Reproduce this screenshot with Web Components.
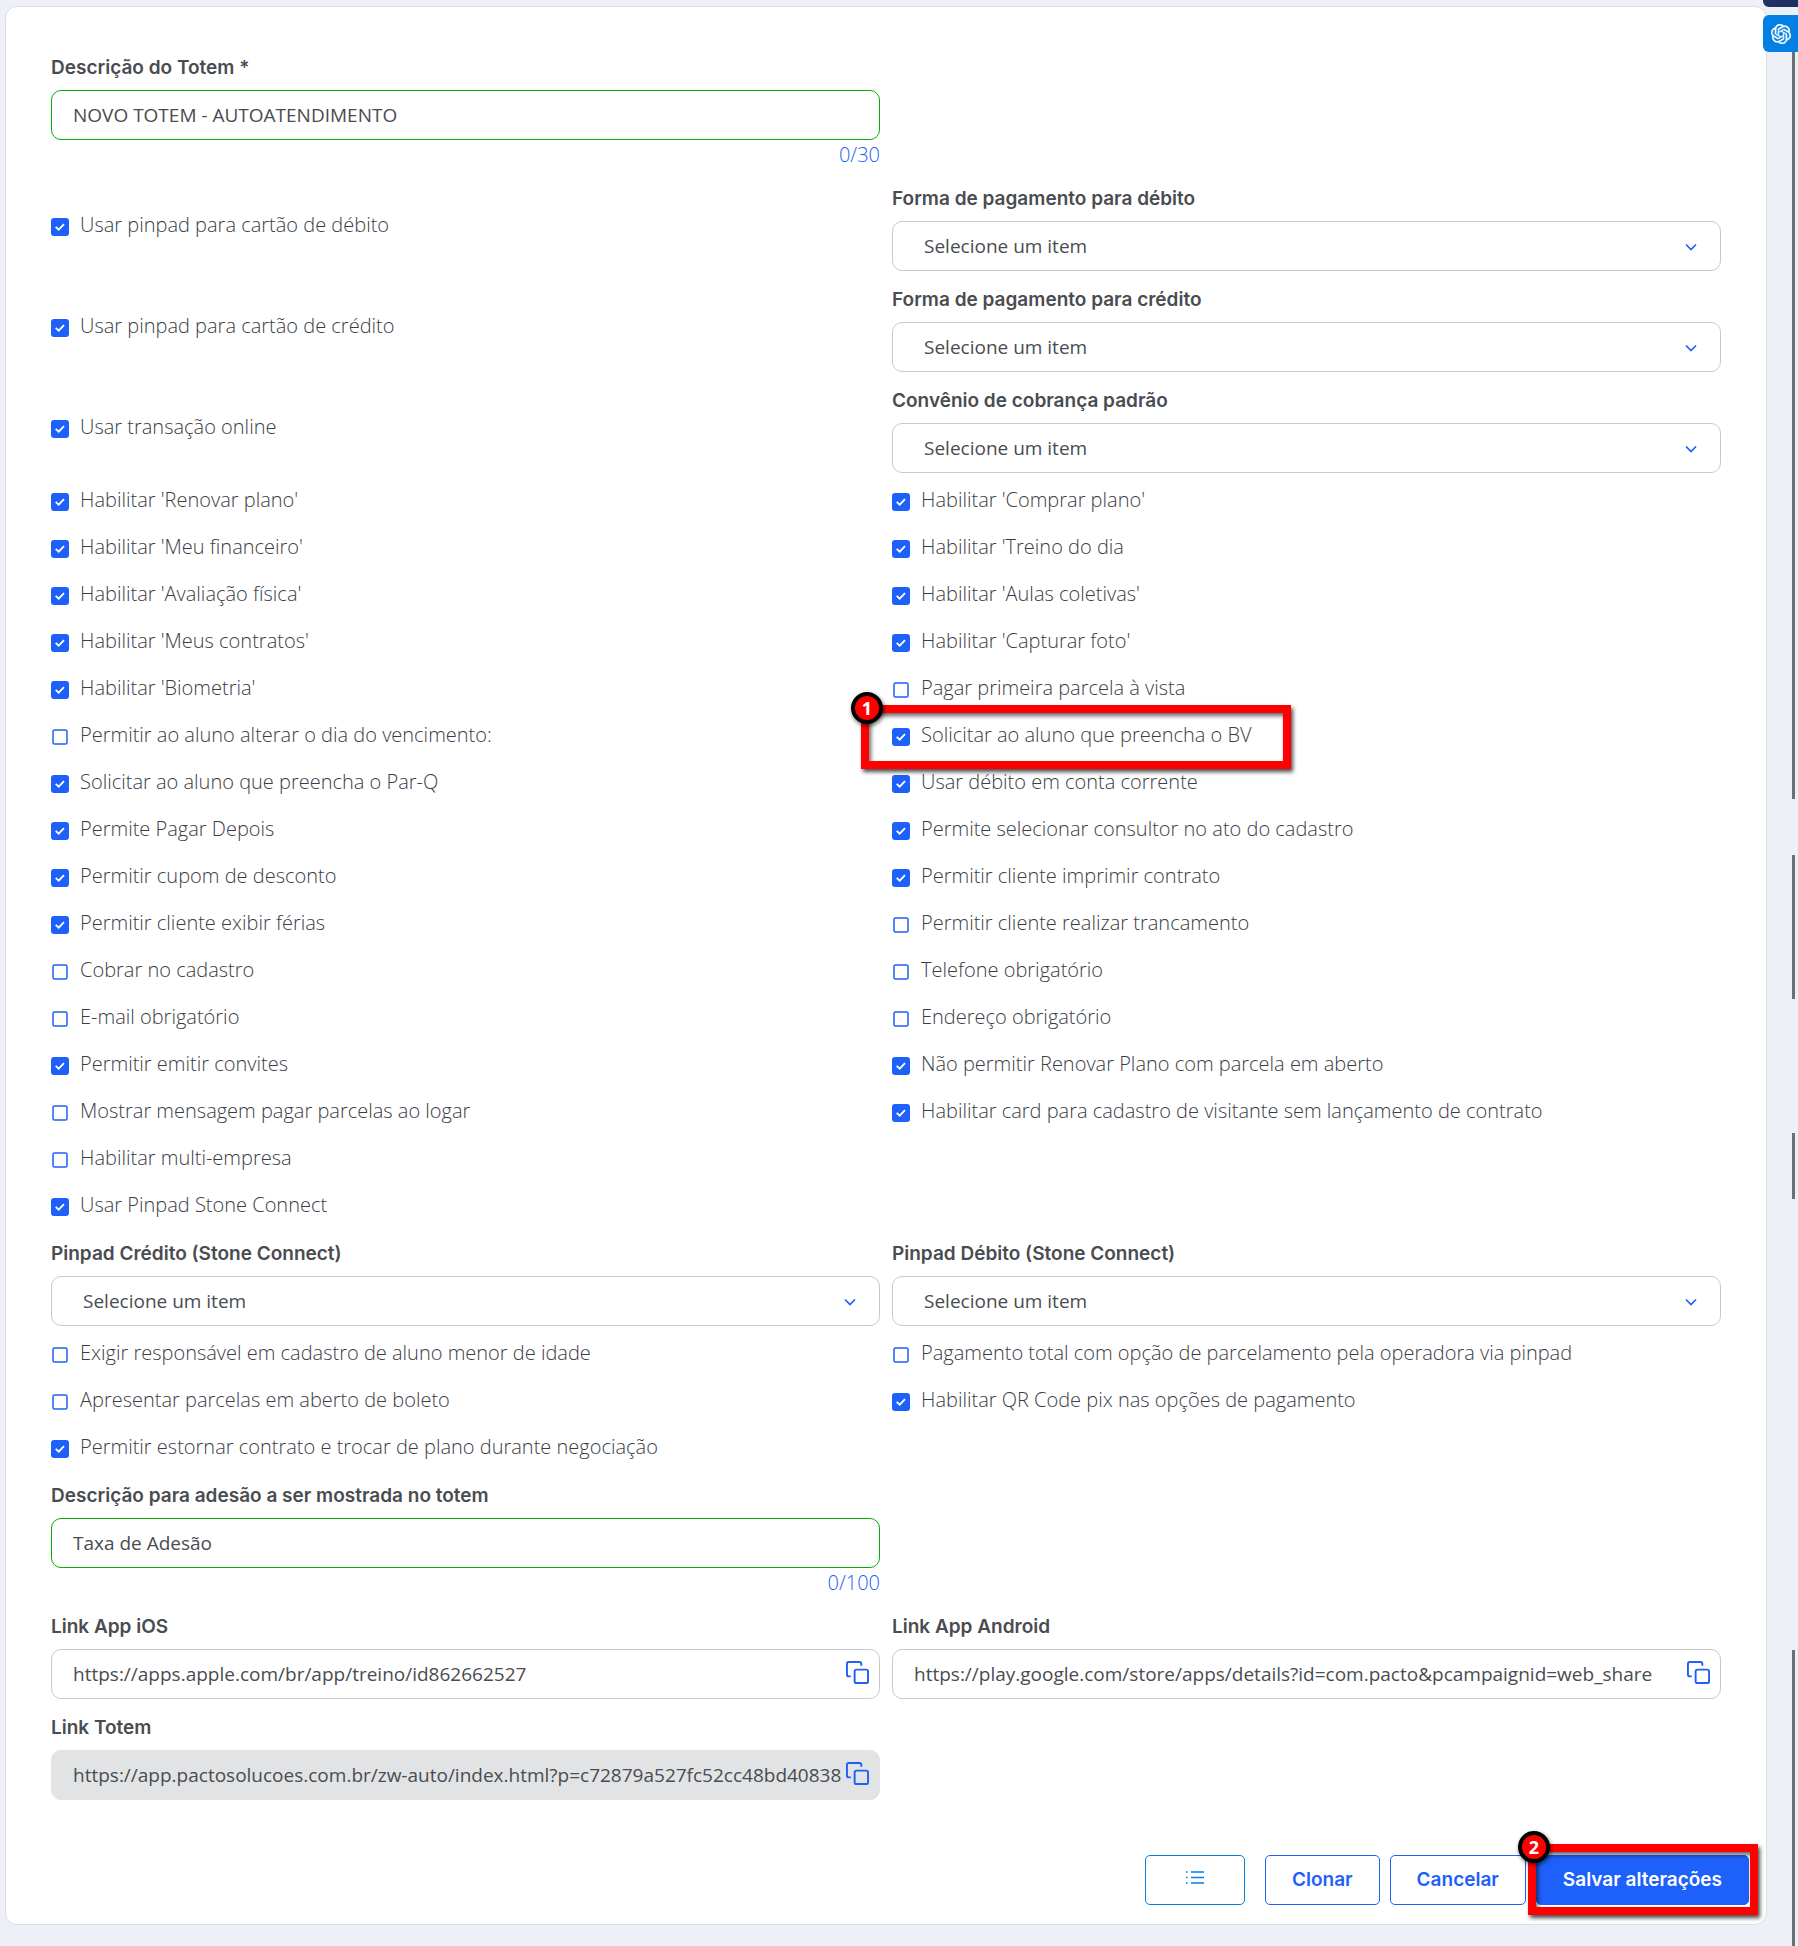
<!DOCTYPE html>
<html lang="pt-BR">
<head>
<meta charset="utf-8">
<meta name="viewport" content="width=device-width, initial-scale=1">
<title>Configuração do Totem</title>
<style>
  * {
    box-sizing: border-box;
  }

  body {
    --blue: #1e60fa;
    --text: #494c50;
    --text-light: #3a3d45;
    --line: #c7c9cc;
    --label-font: Inter, "Open Sans", sans-serif;
    margin: 0;
    background: #edf0f6;
    color: var(--text);
    font-family: "Open Sans", "Noto Sans", sans-serif;
    font-size: 19px;
  }
</style>
</head>
<body>
<totem-page></totem-page>

<script>
class TotemField extends HTMLElement {
  connectedCallback() {
    const label = this.getAttribute('label');
    const value = this.getAttribute('value') || '';
    const count = this.getAttribute('count');
    const disabled = this.hasAttribute('disabled') ? 'disabled' : '';

    this.attachShadow({ mode: 'open' }).innerHTML = `
      <style>
        * {
          box-sizing: border-box;
        }

        :host {
          display: block;
          padding-bottom: 17px;
        }

        label {
          display: block;
          margin-bottom: 10px;
          font: 600 19px/24px var(--label-font);
        }

        .control {
          position: relative;
        }

        input {
          display: block;
          width: 100%;
          height: 50px;
          padding: 0 22px 0 21px;
          border: 1px solid var(--line);
          border-radius: 10px;
          background: #fff;
          color: inherit;
          font: inherit;
        }

        :host([valid]) input {
          border-color: #04af04;
        }

        input:disabled {
          border-color: #e2e3e5;
          background: #e2e3e5;
        }

        .count {
          color: var(--blue);
          font-size: 20px;
          font-weight: 300;
          line-height: 30px;
          text-align: right;
        }

        button {
          position: absolute;
          top: 12px;
          right: 11px;
          padding: 0;
          border: 0;
          background: none;
          color: var(--blue);
          cursor: pointer;
        }

        svg {
          display: block;
        }
      </style>
      <label for="input">${label}</label>
      <div class="control">
        <input id="input" type="text" value="${value}" ${disabled}>
        ${this.hasAttribute('copy') ? `
          <button type="button" aria-label="Copiar">
            <svg width="23" height="23" viewBox="0 0 24 24" fill="none" stroke="currentColor" stroke-width="2" stroke-linejoin="round">
              <rect x="9" y="9" width="14" height="14" rx="2"/>
              <path d="M16 5V3a2 2 0 0 0-2-2H3a2 2 0 0 0-2 2v11a2 2 0 0 0 2 2h2"/>
            </svg>
          </button>` : ''}
      </div>
      ${count ? `<div class="count">${count}</div>` : ''}
    `;
  }
}

class TotemSelect extends HTMLElement {
  connectedCallback() {
    this.attachShadow({ mode: 'open' }).innerHTML = `
      <style>
        * {
          box-sizing: border-box;
        }

        :host {
          display: block;
          padding-bottom: 17px;
        }

        label {
          display: block;
          margin-bottom: 10px;
          font: 600 19px/24px var(--label-font);
        }

        .control {
          position: relative;
        }

        select {
          display: block;
          width: 100%;
          height: 50px;
          padding: 0 48px 0 31px;
          appearance: none;
          border: 1px solid var(--line);
          border-radius: 10px;
          background: #fff;
          color: inherit;
          font: inherit;
        }

        svg {
          position: absolute;
          top: 22px;
          right: 24px;
          pointer-events: none;
        }
      </style>
      <label for="select">${this.getAttribute('label')}</label>
      <div class="control">
        <select id="select"><option>Selecione um item</option></select>
        <svg width="12" height="8" viewBox="0 0 12 8" fill="none" stroke="var(--blue)" stroke-width="1.7">
          <path d="M1 1.5l5 5 5-5"/>
        </svg>
      </div>
    `;
  }
}

class TotemCheck extends HTMLElement {
  connectedCallback() {
    this.attachShadow({ mode: 'open' }).innerHTML = `
      <style>
        :host {
          display: block;
          min-height: 47px;
        }

        :host([tall]) {
          padding-top: 28px;
        }

        label {
          display: inline-flex;
          align-items: flex-start;
          gap: 11px;
          color: var(--text-light);
          font-size: 20px;
          font-weight: 300;
          line-height: 20px;
        }

        .box {
          display: grid;
          flex: none;
          margin-top: 3px;
        }

        input,
        svg {
          grid-area: 1 / 1;
          width: 18px;
          height: 18px;
          margin: 0;
        }

        input {
          appearance: none;
          border-radius: 3px;
        }

        input:checked {
          background: var(--blue);
        }

        svg {
          fill: none;
          pointer-events: none;
        }

        rect {
          stroke: var(--blue);
          stroke-width: 1.5;
        }

        path {
          stroke: #fff;
          stroke-width: 1.8;
        }

        input:checked + svg rect,
        input:not(:checked) + svg path {
          display: none;
        }
      </style>
      <label>
        <span class="box">
          <input type="checkbox" ${this.hasAttribute('checked') ? 'checked' : ''}>
          <svg viewBox="0 0 18 18">
            <rect x="2" y="2" width="14" height="14" rx="1.5"/>
            <path d="M4.7 8.8l3 2.9 5.3-5.6"/>
          </svg>
        </span>
        <slot></slot>
      </label>
    `;
  }
}

class TotemButton extends HTMLElement {
  connectedCallback() {
    this.attachShadow({ mode: 'open' }).innerHTML = `
      <style>
        :host {
          display: block;
        }

        button {
          display: flex;
          align-items: center;
          justify-content: center;
          height: 50px;
          padding: 0 26px;
          border: 1px solid var(--blue);
          border-radius: 5px;
          background: #fff;
          color: var(--blue);
          font: 600 19px/24px var(--label-font);
          white-space: nowrap;
          cursor: pointer;
        }

        :host([primary]) button {
          background: var(--blue);
          color: #fff;
        }

        :host([icon]) button {
          width: 100px;
          border-color: #0380e3;
          color: #0380e3;
        }
      </style>
      <button type="button" aria-label="${this.getAttribute('aria-label') || this.textContent.trim()}"><slot></slot></button>
    `;
  }
}

// Red frame with a numbered badge, drawn over whatever it wraps
class StepMark extends HTMLElement {
  connectedCallback() {
    this.attachShadow({ mode: 'open' }).innerHTML = `
      <style>
        :host {
          display: block;
          position: relative;
        }

        .frame {
          position: absolute;
          inset: var(--mark-inset);
          width: var(--mark-width, auto);
          box-sizing: border-box;
          border: 8px solid #f00;
          box-shadow: 2px 3px 4px rgba(0, 0, 0, 0.7), inset 2px 3px 4px rgba(0, 0, 0, 0.6);
          pointer-events: none;
        }

        .badge {
          position: absolute;
          top: -21px;
          left: -18px;
          box-sizing: border-box;
          width: 32px;
          height: 32px;
          border: 4px solid #000;
          border-radius: 50%;
          background: #f00;
          box-shadow: 1px 2px 4px rgba(0, 0, 0, 0.6);
          color: #fff;
          font: 700 18px/24px "Noto Sans", "Open Sans", sans-serif;
          text-align: center;
        }
      </style>
      <slot></slot>
      <div class="frame"><div class="badge">${this.getAttribute('step')}</div></div>
    `;
  }
}

class SideRail extends HTMLElement {
  connectedCallback() {
    this.attachShadow({ mode: 'open' }).innerHTML = `
      <style>
        :host {
          display: flex;
          flex-direction: column;
          align-items: flex-end;
          position: relative;
          padding-right: 3px;
        }

        i {
          width: 3px;
          background: #6c7074;
        }

        .space {
          background: none;
        }

        .tab {
          position: absolute;
          left: -4px;
          right: 0;
          border-radius: 6px 0 0 6px;
        }

        .menu {
          top: 0;
          height: 7px;
          border-radius: 0 0 0 6px;
          background: #1f3161;
        }

        .assistant {
          display: grid;
          place-items: center start;
          top: 15px;
          height: 37px;
          padding: 0 0 0 8px;
          border: 0;
          background: #0380e3;
          color: #fff;
        }
      </style>
      <i class="space" style="flex: 50"></i>
      <i style="flex: 749"></i>
      <i class="space" style="flex: 56"></i>
      <i style="flex: 144"></i>
      <i class="space" style="flex: 134"></i>
      <i style="flex: 66"></i>
      <i class="space" style="flex: 451"></i>
      <i style="flex: 296"></i>
      <div class="tab menu"></div>
      <button class="tab assistant" type="button" aria-label="Assistente">
        <svg width="20" height="20" viewBox="0 0 24 24" fill="currentColor" stroke="currentColor" stroke-width="0.5">
          <path d="M22.2819 9.8211a5.9847 5.9847 0 0 0-.5157-4.9108 6.0462 6.0462 0 0 0-6.5098-2.9A6.0651 6.0651 0 0 0 4.9807 4.1818a5.9847 5.9847 0 0 0-3.9977 2.9 6.0462 6.0462 0 0 0 .7427 7.0966 5.98 5.98 0 0 0 .511 4.9107 6.051 6.051 0 0 0 6.5146 2.9001A5.9847 5.9847 0 0 0 13.2599 24a6.0557 6.0557 0 0 0 5.7718-4.2058 5.9894 5.9894 0 0 0 3.9977-2.9001 6.0557 6.0557 0 0 0-.7475-7.0729zm-9.022 12.6081a4.4755 4.4755 0 0 1-2.8764-1.0408l.1419-.0804 4.7783-2.7582a.7948.7948 0 0 0 .3927-.6813v-6.7369l2.02 1.1686a.071.071 0 0 1 .038.052v5.5826a4.504 4.504 0 0 1-4.4945 4.4944zm-9.6607-4.1254a4.4708 4.4708 0 0 1-.5346-3.0137l.142.0852 4.783 2.7582a.7712.7712 0 0 0 .7806 0l5.8428-3.3685v2.3324a.0804.0804 0 0 1-.0332.0615L9.74 19.9502a4.4992 4.4992 0 0 1-6.1408-1.6464zM2.3408 7.8956a4.485 4.485 0 0 1 2.3655-1.9728V11.6a.7664.7664 0 0 0 .3879.6765l5.8144 3.3543-2.0201 1.1685a.0757.0757 0 0 1-.071 0l-4.8303-2.7865A4.504 4.504 0 0 1 2.3408 7.872zm16.5963 3.8558L13.1038 8.364 15.1192 7.2a.0757.0757 0 0 1 .071 0l4.8303 2.7913a4.4944 4.4944 0 0 1-.6765 8.1042v-5.6772a.79.79 0 0 0-.407-.667zm2.0107-3.0231l-.142-.0852-4.7735-2.7818a.7759.7759 0 0 0-.7854 0L9.409 9.2297V6.8974a.0662.0662 0 0 1 .0284-.0615l4.8303-2.7866a4.4992 4.4992 0 0 1 6.6802 4.66zM8.3065 12.863l-2.02-1.1638a.0804.0804 0 0 1-.038-.0567V6.0742a4.4992 4.4992 0 0 1 7.3757-3.4537l-.142.0805L8.704 5.459a.7948.7948 0 0 0-.3927.6813zm1.0976-2.3654l2.602-1.4998 2.6069 1.4998v2.9994l-2.5974 1.4997-2.6067-1.4997Z"/>
        </svg>
      </button>
    `;
  }
}

class TotemPage extends HTMLElement {
  connectedCallback() {
    this.attachShadow({ mode: 'open' }).innerHTML = `
      <style>
        :host {
          display: grid;
          grid-template-columns: minmax(0, 1fr) 31px;
          min-height: 100vh;
        }

        main {
          box-sizing: border-box;
          align-self: start;
          margin: 6px 0 20px 5px;
          padding: 49px 45px 19px 45px;
          border: 1px solid #dcdee3;
          border-radius: 12px;
          background: #fff;
        }

        form {
          display: grid;
          grid-template-columns: repeat(2, minmax(0, 1fr));
          column-gap: 12px;
        }

        .left {
          grid-column: 1;
        }

        .highlight {
          --mark-inset: -20px auto 3px -31px;
          --mark-width: 430px;
        }

        footer {
          display: flex;
          justify-content: flex-end;
          gap: 10px;
          margin: 38px -28px 0 0;
        }

        footer totem-button[icon] {
          margin-right: 10px;
        }

        footer step-mark {
          --mark-inset: -11px -9px -10px -8px;
        }
      </style>
      <main>
        <form>
          <totem-field class="left" label="Descrição do Totem *" value="NOVO TOTEM - AUTOATENDIMENTO" count="0/30" valid></totem-field>
          <totem-check class="left" tall checked>Usar pinpad para cartão de débito</totem-check>
          <totem-select label="Forma de pagamento para débito"></totem-select>
          <totem-check tall checked>Usar pinpad para cartão de crédito</totem-check>
          <totem-select label="Forma de pagamento para crédito"></totem-select>
          <totem-check tall checked>Usar transação online</totem-check>
          <totem-select label="Convênio de cobrança padrão"></totem-select>
          <totem-check checked>Habilitar 'Renovar plano'</totem-check>
          <totem-check checked>Habilitar 'Comprar plano'</totem-check>
          <totem-check checked>Habilitar 'Meu financeiro'</totem-check>
          <totem-check checked>Habilitar 'Treino do dia</totem-check>
          <totem-check checked>Habilitar 'Avaliação física'</totem-check>
          <totem-check checked>Habilitar 'Aulas coletivas'</totem-check>
          <totem-check checked>Habilitar 'Meus contratos'</totem-check>
          <totem-check checked>Habilitar 'Capturar foto'</totem-check>
          <totem-check checked>Habilitar 'Biometria'</totem-check>
          <totem-check>Pagar primeira parcela à vista</totem-check>
          <totem-check>Permitir ao aluno alterar o dia do vencimento:</totem-check>
          <step-mark class="highlight" step="1">
            <totem-check checked>Solicitar ao aluno que preencha o BV</totem-check>
          </step-mark>
          <totem-check checked>Solicitar ao aluno que preencha o Par-Q</totem-check>
          <totem-check checked>Usar débito em conta corrente</totem-check>
          <totem-check checked>Permite Pagar Depois</totem-check>
          <totem-check checked>Permite selecionar consultor no ato do cadastro</totem-check>
          <totem-check checked>Permitir cupom de desconto</totem-check>
          <totem-check checked>Permitir cliente imprimir contrato</totem-check>
          <totem-check checked>Permitir cliente exibir férias</totem-check>
          <totem-check>Permitir cliente realizar trancamento</totem-check>
          <totem-check>Cobrar no cadastro</totem-check>
          <totem-check>Telefone obrigatório</totem-check>
          <totem-check>E-mail obrigatório</totem-check>
          <totem-check>Endereço obrigatório</totem-check>
          <totem-check checked>Permitir emitir convites</totem-check>
          <totem-check checked>Não permitir Renovar Plano com parcela em aberto</totem-check>
          <totem-check>Mostrar mensagem pagar parcelas ao logar</totem-check>
          <totem-check checked>Habilitar card para cadastro de visitante sem lançamento de contrato</totem-check>
          <totem-check class="left">Habilitar multi-empresa</totem-check>
          <totem-check class="left" checked>Usar Pinpad Stone Connect</totem-check>
          <totem-select class="left" label="Pinpad Crédito (Stone Connect)"></totem-select>
          <totem-select label="Pinpad Débito (Stone Connect)"></totem-select>
          <totem-check>Exigir responsável em cadastro de aluno menor de idade</totem-check>
          <totem-check>Pagamento total com opção de parcelamento pela operadora via pinpad</totem-check>
          <totem-check>Apresentar parcelas em aberto de boleto</totem-check>
          <totem-check checked>Habilitar QR Code pix nas opções de pagamento</totem-check>
          <totem-check class="left" checked>Permitir estornar contrato e trocar de plano durante negociação</totem-check>
          <totem-field class="left" label="Descrição para adesão a ser mostrada no totem" value="Taxa de Adesão" count="0/100" valid></totem-field>
          <totem-field class="left" label="Link App iOS" value="https://apps.apple.com/br/app/treino/id862662527" copy></totem-field>
          <totem-field label="Link App Android" value="https://play.google.com/store/apps/details?id=com.pacto&amp;pcampaignid=web_share" copy></totem-field>
          <totem-field class="left" label="Link Totem" value="https://app.pactosolucoes.com.br/zw-auto/index.html?p=c72879a527fc52cc48bd40838" copy disabled></totem-field>
        </form>
        <footer>
          <totem-button icon aria-label="Lista">
            <svg width="18" height="18" viewBox="0 0 18 18" fill="none" stroke="currentColor" stroke-width="1.5">
              <path d="M5 1h13M5 6.5h13M5 12h13"/>
              <path d="M0 1h1.6M0 6.5h1.6M0 12h1.6"/>
            </svg>
          </totem-button>
          <totem-button>Clonar</totem-button>
          <totem-button>Cancelar</totem-button>
          <step-mark step="2">
            <totem-button primary>Salvar alterações</totem-button>
          </step-mark>
        </footer>
      </main>
      <side-rail></side-rail>
    `;
  }
}

customElements.define('totem-field', TotemField);
customElements.define('totem-select', TotemSelect);
customElements.define('totem-check', TotemCheck);
customElements.define('totem-button', TotemButton);
customElements.define('step-mark', StepMark);
customElements.define('side-rail', SideRail);
customElements.define('totem-page', TotemPage);
</script>
</body>
</html>
